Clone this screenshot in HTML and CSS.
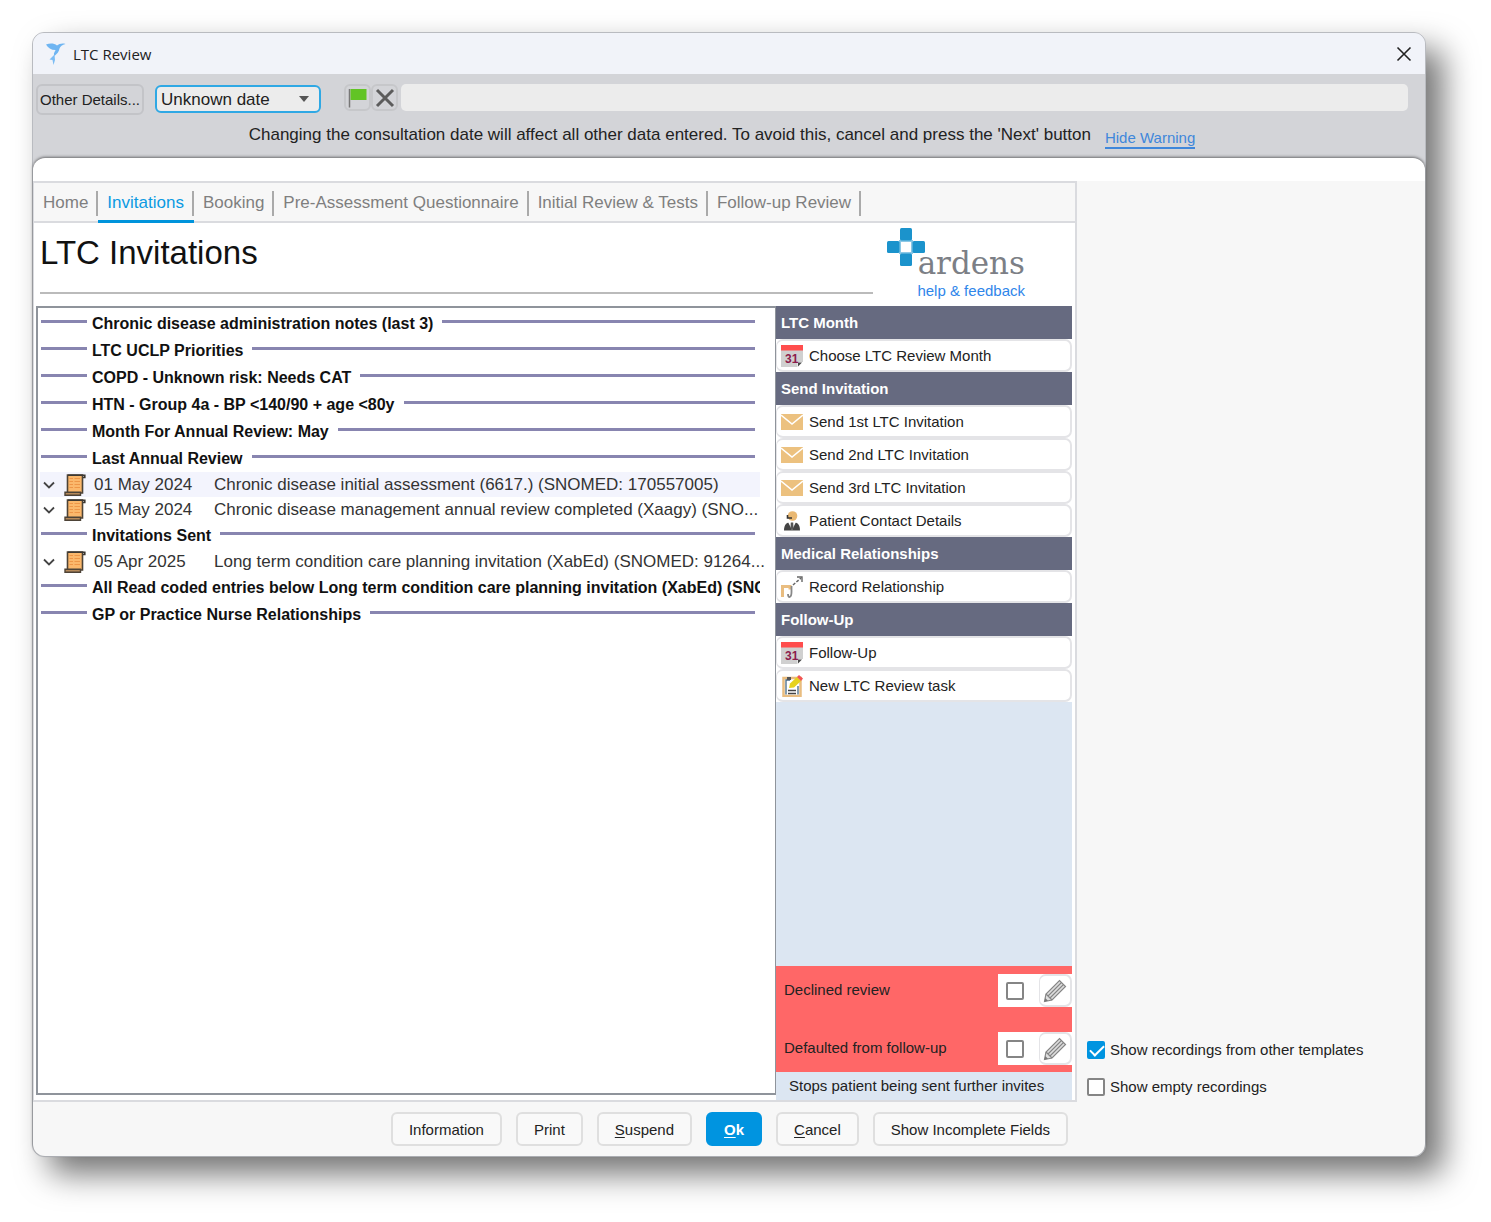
FILE: index.html
```html
<!DOCTYPE html>
<html lang="en">
<head>
    <meta charset="UTF-8">
    <meta name="viewport" content="width=device-width, initial-scale=1.0">
    <title>LTC Review</title>
    <link rel="stylesheet" href="styles.css">
</head>
<body>
    <!-- shared icons -->
    <svg class="icon-defs" width="0" height="0" aria-hidden="true">
        <symbol id="icon-scroll" viewBox="0 0 22 22">
            <path d="M3.500 1H18.500V19H3.500Z" fill="#fbb86c" stroke="#4d4337" stroke-width="1.600"/>
            <path d="M5.500 4.500H9M10.500 4.500H16M5.500 7.500H9M10.500 7.500H16M5.500 10.500H9M10.500 10.500H16M5.500 13.500H9M10.500 13.500H16" stroke="#ee9648" stroke-width="1.200"/>
            <path d="M1 18.300H16.500V21.200H1Z" fill="#b5895a" stroke="#4d4337" stroke-width="1.400"/>
            <path d="M4 1.200H20.800V3.500H19" fill="none" stroke="#3c3832" stroke-width="1.600"/>
        </symbol>
        <symbol id="icon-chevron" viewBox="0 0 12 8">
            <path d="M1 1.500L6 6.500L11 1.500" fill="none" stroke="#444" stroke-width="1.800"/>
        </symbol>
        <symbol id="icon-mail" viewBox="0 0 22 16">
            <path d="M0 0H22V16H0Z" fill="#ecc17f"/>
            <path d="M0 1L11 10L22 1" fill="none" stroke="#fff" stroke-width="1.600"/>
        </symbol>
        <symbol id="icon-pencil" viewBox="0 0 24 24">
            <path d="M1.500 22.500L3 15L16.500 1.500L22.500 7.500L9 21Z" fill="#dedede" stroke="#858585" stroke-width="1.200"/>
            <path d="M3 15L9 21M5 17L18.500 3.500M7 19L20.500 5.500" fill="none" stroke="#858585" stroke-width="1.100"/>
            <path d="M1.500 22.500L2.300 19L5 21.800Z" fill="#777"/>
        </symbol>
    </svg>

    <div class="window">
        <header class="titlebar">
            <svg class="app-icon" width="20" height="22" viewBox="0 0 20 22">
                <path d="M0 1.500C4 0 8 0 11 2.500C13 1 16 0 19.500 1C16 2 14.500 3 13.500 5.500C13 9 11 10.500 8.500 13C7 10 9 9 9.500 7C5 7 2 5 0 1.500Z" fill="#6fb5f2"/>
                <path d="M8.500 11.500L3.500 16.500L6.500 17L7.500 22L9 17Z" fill="#7cbcf4"/>
            </svg>
            <span class="window-title">LTC Review</span>
            <button class="close-btn" type="button" aria-label="Close">
                <svg width="16" height="16" viewBox="0 0 16 16"><path d="M1.500 1.500L14.500 14.500M14.500 1.500L1.500 14.500" stroke="#222" stroke-width="1.600"/></svg>
            </button>
        </header>

        <div class="toolbar">
            <div class="toolbar-row">
                <button class="details-btn" type="button">Other Details...</button>
                <div class="date-select">
                    <select aria-label="Consultation date">
                        <option>Unknown date</option>
                    </select>
                    <svg class="select-arrow" width="10" height="6" viewBox="0 0 10 6"><path d="M0 0H10L5 6Z" fill="#555"/></svg>
                </div>
                <div class="flag-bar">
                    <button class="tool-btn" type="button" aria-label="Flag">
                        <svg width="20" height="20" viewBox="0 0 20 20"><path d="M1.500 1V19.500" stroke="#777" stroke-width="1.500"/><path d="M2.500 1H18.500V12H2.500Z" fill="#62c425"/></svg>
                    </button>
                    <button class="tool-btn" type="button" aria-label="Clear">
                        <svg width="20" height="20" viewBox="0 0 20 20"><path d="M2 2L18 18M18 2L2 18" stroke="#5c5c5c" stroke-width="3"/></svg>
                    </button>
                    <input class="notes-input" type="text" aria-label="Notes" readonly>
                </div>
            </div>
            <div class="warning-row">
                <span>Changing the consultation date will affect all other data entered. To avoid this, cancel and press the 'Next' button</span>
                <a href="#">Hide Warning</a>
            </div>
        </div>

        <div class="content">
            <main class="panel">
                <nav class="tabs">
                    <a href="#">Home</a>
                    <a href="#" class="active">Invitations</a>
                    <a href="#">Booking</a>
                    <a href="#">Pre-Assessment Questionnaire</a>
                    <a href="#">Initial Review &amp; Tests</a>
                    <a href="#">Follow-up Review</a>
                </nav>

                <div class="panel-header">
                    <h1>LTC Invitations</h1>
                    <div class="brand">
                        <div class="brand-logo">
                            <svg width="38" height="38" viewBox="0 0 38 38" fill="#1b93cc">
                                <path d="M12 12H26V26H12Z" fill="#8cc8e6"/>
                                <rect x="14" y="14" width="10" height="10" fill="#fff"/>
                                <rect x="13" y="0" width="12" height="12.500" rx="1.500"/>
                                <rect x="0" y="13" width="12.500" height="12" rx="1.500"/>
                                <rect x="25.500" y="13" width="12.500" height="12" rx="1.500"/>
                                <rect x="13" y="25.500" width="12" height="12.500" rx="1.500"/>
                            </svg>
                            <span class="brand-name">ardens</span>
                        </div>
                        <a href="#">help &amp; feedback</a>
                    </div>
                </div>

                <div class="panel-body">
                    <section class="records">
                        <h2><span>Chronic disease administration notes (last 3)</span></h2>
                        <h2><span>LTC UCLP Priorities</span></h2>
                        <h2><span>COPD - Unknown risk: Needs CAT</span></h2>
                        <h2><span>HTN - Group 4a - BP &lt;140/90 + age &lt;80y</span></h2>
                        <h2><span>Month For Annual Review: May</span></h2>
                        <h2><span>Last Annual Review</span></h2>
                        <table>
                            <tr class="selected">
                                <td class="col-toggle"><svg width="12" height="8"><use href="#icon-chevron"/></svg></td>
                                <td class="col-icon"><svg width="22" height="22"><use href="#icon-scroll"/></svg></td>
                                <td class="col-date">01 May 2024</td>
                                <td>Chronic disease initial assessment (6617.) (SNOMED: 170557005)</td>
                            </tr>
                            <tr>
                                <td class="col-toggle"><svg width="12" height="8"><use href="#icon-chevron"/></svg></td>
                                <td class="col-icon"><svg width="22" height="22"><use href="#icon-scroll"/></svg></td>
                                <td class="col-date">15 May 2024</td>
                                <td>Chronic disease management annual review completed (Xaagy) (SNO...</td>
                            </tr>
                        </table>
                        <h2><span>Invitations Sent</span></h2>
                        <table>
                            <tr>
                                <td class="col-toggle"><svg width="12" height="8"><use href="#icon-chevron"/></svg></td>
                                <td class="col-icon"><svg width="22" height="22"><use href="#icon-scroll"/></svg></td>
                                <td class="col-date">05 Apr 2025</td>
                                <td>Long term condition care planning invitation (XabEd) (SNOMED: 91264...</td>
                            </tr>
                        </table>
                        <h2><span>All Read coded entries below Long term condition care planning invitation (XabEd) (SNO</span></h2>
                        <h2><span>GP or Practice Nurse Relationships</span></h2>
                    </section>

                    <aside class="actions">
                        <div class="menu">
                            <h3>LTC Month</h3>
                            <button type="button">
                                <svg width="22" height="22" viewBox="0 0 22 22">
                                    <path d="M0 5H22V17H16.500V22H0Z" fill="#d0d0d0"/>
                                    <path d="M0 0H22V5.500H0Z" fill="#ff4d4d"/>
                                    <path d="M17 17.500H21L17 21.500Z" fill="#444"/>
                                    <text x="4" y="18" class="calendar-day">31</text>
                                </svg>Choose LTC Review Month
                            </button>
                            <h3>Send Invitation</h3>
                            <button type="button"><svg width="22" height="16"><use href="#icon-mail"/></svg>Send 1st LTC Invitation</button>
                            <button type="button"><svg width="22" height="16"><use href="#icon-mail"/></svg>Send 2nd LTC Invitation</button>
                            <button type="button"><svg width="22" height="16"><use href="#icon-mail"/></svg>Send 3rd LTC Invitation</button>
                            <button type="button">
                                <svg width="22" height="22" viewBox="0 0 22 22">
                                    <circle cx="11.500" cy="6" r="4.800" fill="#e9b872"/>
                                    <path d="M6.500 5V8H11" fill="none" stroke="#333" stroke-width="1.600"/>
                                    <path d="M3 20.500C3 14 6 12 11 12C16 12 19 14 19 20.500Z" fill="#444"/>
                                    <path d="M7 12L11 20L15 12Z" fill="#fff"/>
                                    <path d="M9.800 12.500H12.200L12.500 18L11 20L9.500 18Z" fill="#555"/>
                                </svg>Patient Contact Details
                            </button>
                            <h3>Medical Relationships</h3>
                            <button type="button">
                                <svg width="22" height="22" viewBox="0 0 22 22">
                                    <path d="M1.500 21V10.500H9V13.500" fill="none" stroke="#e9bd80" stroke-width="3"/>
                                    <path d="M10.500 10V16C10.500 22 7 22.500 7 18" fill="none" stroke="#888" stroke-width="1.800"/>
                                    <path d="M12 9L20 2" fill="none" stroke="#666" stroke-width="1.500" stroke-dasharray="3 1.500"/>
                                    <path d="M16 1H21V6" fill="none" stroke="#666" stroke-width="1.400"/>
                                </svg>Record Relationship
                            </button>
                            <h3>Follow-Up</h3>
                            <button type="button">
                                <svg width="22" height="22" viewBox="0 0 22 22">
                                    <path d="M0 5H22V17H16.500V22H0Z" fill="#d0d0d0"/>
                                    <path d="M0 0H22V5.500H0Z" fill="#ff4d4d"/>
                                    <path d="M17 17.500H21L17 21.500Z" fill="#444"/>
                                    <text x="4" y="18" class="calendar-day">31</text>
                                </svg>Follow-Up
                            </button>
                            <button type="button">
                                <svg width="22" height="22" viewBox="0 0 22 22">
                                    <rect x="2.500" y="3" width="17" height="18" fill="#fff" stroke="#e9bd80" stroke-width="2.500"/>
                                    <path d="M5 19.500V5H9M17 11V19.500" fill="none" stroke="#456a86" stroke-width="1.300"/>
                                    <path d="M6 2H10V5H6Z" fill="#555"/>
                                    <path d="M7 15.500H15M7 18.500H15" stroke="#444" stroke-width="1.300"/>
                                    <path d="M8 13L9 8.500L16 2L20 6L13 12.500Z" fill="#e6d21c"/>
                                    <path d="M16 2L18 0L22 3.500L20 6Z" fill="#f25555"/>
                                </svg>New LTC Review task
                            </button>
                        </div>
                        <div class="flags">
                            <div class="flag-row">
                                <label for="declined">Declined review</label>
                                <div class="flag-controls">
                                    <input type="checkbox" id="declined">
                                    <button type="button" aria-label="Edit declined review"><svg width="24" height="24"><use href="#icon-pencil"/></svg></button>
                                </div>
                            </div>
                            <div class="flag-row">
                                <label for="defaulted">Defaulted from follow-up</label>
                                <div class="flag-controls">
                                    <input type="checkbox" id="defaulted">
                                    <button type="button" aria-label="Edit defaulted from follow-up"><svg width="24" height="24"><use href="#icon-pencil"/></svg></button>
                                </div>
                            </div>
                        </div>
                        <p class="flags-note">Stops patient being sent further invites</p>
                    </aside>
                </div>
            </main>

            <div class="options">
                <label><input type="checkbox" checked>Show recordings from other templates</label>
                <label><input type="checkbox">Show empty recordings</label>
            </div>

            <footer class="footer">
                <button type="button">Information</button>
                <button type="button">Print</button>
                <button type="button"><u>S</u>uspend</button>
                <button type="button" class="primary"><u>O</u>k</button>
                <button type="button"><u>C</u>ancel</button>
                <button type="button">Show Incomplete Fields</button>
            </footer>
        </div>
    </div>
</body>
</html>
```

FILE: styles.css
```css
* {
    box-sizing: border-box;
}
body {
    margin: 0;
    padding: 32px 65px 65px 32px;
    min-height: 100vh;
    display: flex;
    background-color: #fff;
    font-family: "Liberation Sans", Arial, sans-serif;
    font-size: 15px;
    color: #222;
}
button, select, input {
    font-family: inherit;
    font-size: inherit;
    color: inherit;
    margin: 0;
}
button {
    padding: 0;
    cursor: pointer;
}
svg {
    display: block;
    flex: none;
}
.icon-defs {
    position: absolute;
}
.calendar-day {
    font: bold 12px "Liberation Sans", Arial, sans-serif;
    fill: #8c1c4c;
}

/* window */
.window {
    flex: 1;
    min-width: 0;
    display: flex;
    flex-direction: column;
    border: 1px solid #b9bbc0;
    border-radius: 12px;
    background-color: #d3d4d8;
    box-shadow: 17px 17px 32px rgba(0,0,0,0.55);
}
.titlebar {
    display: flex;
    align-items: center;
    height: 41px;
    padding: 0 13px;
    border-radius: 11px 11px 0 0;
    background-color: #f1f3f9;
}
.window-title {
    margin-left: 7px;
    font-family: "Open Sans", "Noto Sans", sans-serif;
    font-size: 15px;
}
.close-btn {
    margin-left: auto;
    border: none;
    background: none;
}

/* toolbar */
.toolbar {
    padding: 10px 17px 9px 3px;
}
.toolbar-row {
    display: flex;
    align-items: flex-start;
}
.details-btn {
    height: 31px;
    padding: 0 2px;
    border: 2px solid #c3c4c8;
    border-radius: 6px;
    background-color: #d3d4d8;
}
.date-select {
    position: relative;
    width: 166px;
    margin: 1px 23px 0 11px;
}
.date-select select {
    width: 100%;
    height: 28px;
    padding: 0 4px;
    border: 2px solid #2fa8e4;
    border-radius: 6px;
    background-color: #ececec;
    font-size: 17px;
    appearance: none;
}
.select-arrow {
    position: absolute;
    top: 11px;
    right: 12px;
    pointer-events: none;
}
.flag-bar {
    flex: 1;
    display: flex;
}
.tool-btn {
    width: 27px;
    height: 27px;
    display: flex;
    align-items: center;
    justify-content: center;
    border: 2px solid #c6c7ca;
    border-radius: 6px;
    background-color: #d3d4d8;
}
.notes-input {
    flex: 1;
    height: 27px;
    margin-left: 3px;
    border: none;
    border-radius: 5px;
    background-color: #ececec;
}
.warning-row {
    display: flex;
    justify-content: center;
    align-items: flex-end;
    gap: 14px;
    padding-top: 10px;
    font-size: 17px;
    line-height: 20px;
}
.warning-row span {
    padding-bottom: 4px;
}
.warning-row a {
    font-size: 15px;
    line-height: 18px;
    color: #3f87db;
    text-decoration: none;
    border-bottom: 2px solid #3f87db;
}

/* content */
.content {
    flex: 1;
    display: grid;
    grid-template-columns: minmax(0, 3fr) minmax(0, 1fr);
    grid-template-rows: 1fr auto;
    border-top: 23px solid #fff;
    border-radius: 12px;
    background-color: #f7f7f7;
    box-shadow: 0 -1px 3px rgba(0,0,0,0.5);
}
.panel {
    display: flex;
    flex-direction: column;
    border: 2px solid #dadbdf;
    border-left-width: 1px;
    background-color: #fff;
}
.tabs {
    display: flex;
    align-items: flex-start;
    height: 40px;
    border-bottom: 2px solid #dadbdf;
    background-color: #f7f7f7;
}
.tabs a {
    height: 40px;
    padding: 7px 0 0 9px;
    font-size: 17px;
    line-height: 25px;
    color: #7f7f7f;
    text-decoration: none;
}
.tabs a::after {
    content: "";
    display: inline-block;
    height: 25px;
    margin-left: 8px;
    border-right: 2px solid #aaa;
    vertical-align: middle;
}
.tabs a.active {
    color: #0c9ae2;
    border-bottom: 3px solid #0094dc;
}
.panel-header {
    display: flex;
    height: 83px;
    padding: 5px 50px 0 6px;
}
.panel-header h1 {
    flex: 1;
    height: 66px;
    margin: 0;
    padding-top: 6px;
    border-bottom: 2px solid #bbb;
    font-size: 33px;
    font-weight: normal;
    line-height: 37px;
    color: #111;
}
.brand {
    display: flex;
    flex-direction: column;
    align-items: flex-end;
    padding-left: 14px;
}
.brand-logo {
    display: flex;
    align-items: flex-start;
}
.brand-name {
    margin: 16px 0 0 -7px;
    font-family: "DejaVu Serif", serif;
    font-size: 31px;
    line-height: 38px;
    color: #7c7f86;
}
.brand a {
    font-size: 15px;
    line-height: 18px;
    color: #2f86ea;
    text-decoration: none;
}
.panel-body {
    flex: 1;
    display: flex;
    padding: 0 3px 0 2px;
}

/* records list */
.records {
    flex: 1;
    min-width: 0;
    margin-bottom: 5px;
    padding: 2px 15px 0 2px;
    border: 2px solid #8f949b;
    border-right-width: 1px;
    font-size: 17px;
}
.records h2 {
    display: flex;
    height: 27px;
    margin: 0;
    overflow: hidden;
    font-size: 16px;
    line-height: 27px;
    white-space: nowrap;
    color: #111;
}
.records h2::before, .records h2::after {
    content: "";
    flex: none;
    width: 46px;
    height: 3px;
    margin: 10px 5px 0 1px;
    background-color: #8885b0;
}
.records h2::after {
    flex: 1;
    margin-left: 9px;
}
.records table {
    width: 100%;
    table-layout: fixed;
    border-collapse: collapse;
}
.records td {
    height: 25px;
    padding: 0;
    white-space: nowrap;
    color: #333;
}
.records .selected {
    background-color: #f3f4fd;
}
.records .col-toggle {
    width: 24px;
    padding-left: 3px;
}
.records .col-icon {
    width: 30px;
}
.records .col-date {
    width: 120px;
}

/* action buttons */
.actions {
    width: 296px;
    display: flex;
    flex-direction: column;
    background-color: #dce6f2;
}
.menu {
    background-color: #fff;
}
.actions h3 {
    height: 33px;
    margin: 0;
    padding-left: 5px;
    background-color: #666a80;
    font-size: 15px;
    line-height: 33px;
    color: #fff;
}
.actions button {
    display: flex;
    align-items: center;
    width: 100%;
    height: 33px;
    gap: 6px;
    padding: 0 4px;
    border: 2px solid #e4e4e7;
    border-left-width: 1px;
    border-radius: 7px;
    background-color: #fff;
}
.flags {
    display: flex;
    flex-direction: column;
    gap: 25px;
    margin-top: auto;
    padding: 8px 0 7px 8px;
    background-color: #ff6767;
}
.flag-row {
    display: flex;
    justify-content: space-between;
    line-height: 31px;
}
.flag-controls {
    display: flex;
    align-items: center;
    justify-content: space-between;
    width: 74px;
    padding-left: 8px;
    background-color: #fff;
}
.flag-controls button {
    width: 33px;
    padding: 0 3px;
}
.flags-note {
    margin: 0;
    padding-left: 13px;
    line-height: 28px;
}
input[type="checkbox"] {
    appearance: none;
    flex: none;
    width: 18px;
    height: 18px;
    border: 2px solid #858585;
    border-radius: 2px;
    background-color: #fff;
}
input[type="checkbox"]:checked {
    border-color: #0094e0;
    background-color: #0094e0;
}
input[type="checkbox"]:checked::after {
    content: "";
    display: block;
    width: 12px;
    height: 6px;
    margin: 2px 0 0 1px;
    border: solid #fff;
    border-width: 0 0 2px 2px;
    transform: rotate(-45deg);
}
.options {
    display: flex;
    flex-direction: column;
    justify-content: flex-end;
    gap: 19px;
    padding: 0 0 6px 10px;
}
.options label {
    display: flex;
    align-items: center;
    gap: 5px;
    line-height: 18px;
}

/* bottom buttons */
.footer {
    display: flex;
    justify-content: flex-end;
    gap: 14px;
    padding: 10px 9px 10px 8px;
}
.footer button {
    height: 34px;
    padding: 0 16px;
    border: 2px solid #dfdfdf;
    border-radius: 6px;
    background-color: #f9f9f9;
}
.footer .primary {
    border-color: #0094e0;
    background-color: #0094e0;
    font-weight: bold;
    color: #fff;
}
.footer u {
    text-underline-offset: 2px;
}
```
